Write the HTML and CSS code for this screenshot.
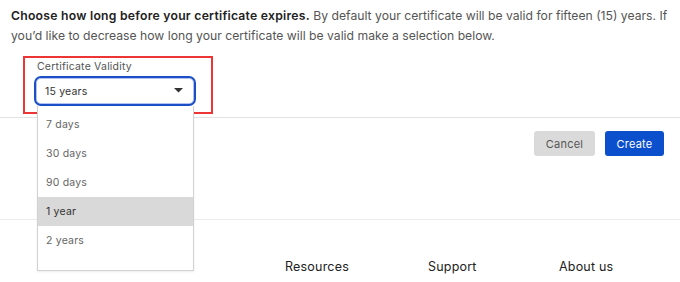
FILE: index.html
```html
<!DOCTYPE html>
<html lang="en">
<head>
    <meta charset="UTF-8">
    <meta name="viewport" content="width=device-width, initial-scale=1.0">
    <title>Certificate Validity</title>
    <link rel="stylesheet" href="styles.css">
</head>
<body>
    <div class="page">
        <p class="intro">
            <strong>Choose how long before your certificate expires.</strong>
            By default your certificate will be valid for fifteen (15) years. If you’d like to decrease how long your certificate will be valid make a selection below.
        </p>

        <div class="field-row">
            <div class="field">
                <label class="field-label">Certificate Validity</label>
                <div class="select">
                    <span class="select-value">15 years</span>
                    <svg class="select-arrow" width="9" height="5" viewBox="0 0 9 5">
                        <path d="M0 0 L9 0 L4.5 4.5 Z" fill="#333"/>
                    </svg>
                </div>
            </div>

            <ul class="menu">
                <li class="menu-item">7 days</li>
                <li class="menu-item">30 days</li>
                <li class="menu-item">90 days</li>
                <li class="menu-item active">1 year</li>
                <li class="menu-item">2 years</li>
            </ul>
        </div>

        <div class="actions">
            <button class="btn btn-cancel">Cancel</button>
            <button class="btn btn-create">Create</button>
        </div>

        <footer class="footer">
            <a class="footer-link">Resources</a>
            <a class="footer-link">Support</a>
            <a class="footer-link">About us</a>
        </footer>
    </div>
</body>
</html>
```

FILE: styles.css
```css
body {
    margin: 0;
    font-family: Inter, "Noto Sans", sans-serif;
    background: #fff;
    color: #555;
}

.page {
    width: 680px;
    height: 282px;
    overflow: hidden;
}

.intro {
    margin: 0;
    padding: 6px 8px 0 11px;
    font-size: 12.2px;
    letter-spacing: 0;
    line-height: 20px;
    color: #555;
}

.intro strong {
    color: #222;
    font-weight: 600;
    letter-spacing: 0.25px;
}

.field-row {
    position: relative;
    margin-top: 10px;
    padding-left: 12px;
    border-bottom: 1px solid #e3e3e3;
    padding-bottom: 3px;
}

.field {
    width: 190px;
    margin-left: 11px;
    box-sizing: border-box;
    border: 2px solid #ee3535;
    padding: 1px 15px 6px 9px;
}

.field-label {
    display: block;
    margin-left: 3px;
    font-size: 10.5px;
    letter-spacing: 0.2px;
    line-height: 16px;
    color: #555;
    margin-bottom: 1px;
}

.select {
    display: flex;
    align-items: center;
    justify-content: space-between;
    height: 30px;
    box-sizing: border-box;
    border: 2px solid #1c4fc6;
    border-radius: 7px;
    box-shadow: inset 0 0 0 1px #b4c2ee;
    padding: 0 11px 0 9px;
    font-size: 10.5px;
    letter-spacing: 0.2px;
    color: #333;
}

.select-arrow {
    margin-top: -2px;
}

.menu {
    position: absolute;
    top: 50px;
    left: 37px;
    width: 157px;
    height: 165px;
    box-sizing: border-box;
    margin: 0;
    padding: 4px 0 0;
    list-style: none;
    background: #fff;
    border: 1px solid #d2d2d2;
    border-top: none;
    box-shadow: 0 1px 2px rgba(0,0,0,0.08);
    z-index: 2;
}

.menu-item {
    height: 29px;
    line-height: 29px;
    padding-left: 8px;
    font-size: 10.5px;
    letter-spacing: 0.2px;
    color: #666;
}

.menu-item.active {
    background: #d9d9d9;
    color: #333;
}

.actions {
    display: flex;
    justify-content: flex-end;
    gap: 10px;
    padding: 13px 16px 0 0;
    height: 102px;
    box-sizing: border-box;
    border-bottom: 1px solid #ebebeb;
}

.btn {
    height: 25px;
    border: none;
    border-radius: 3px;
    font-family: inherit;
    font-size: 11px;
    letter-spacing: 0.2px;
    padding: 0;
}

.btn-cancel {
    background: #dadada;
    color: #555;
    width: 61px;
}

.btn-create {
    background: #0b4fcc;
    color: #fff;
    width: 59px;
}

.footer {
    display: grid;
    grid-template-columns: 143px 131px auto;
    padding: 37px 0 0 285px;
}

.footer-link {
    font-size: 12.5px;
    letter-spacing: 0.2px;
    line-height: 20px;
    color: #222;
}
```
